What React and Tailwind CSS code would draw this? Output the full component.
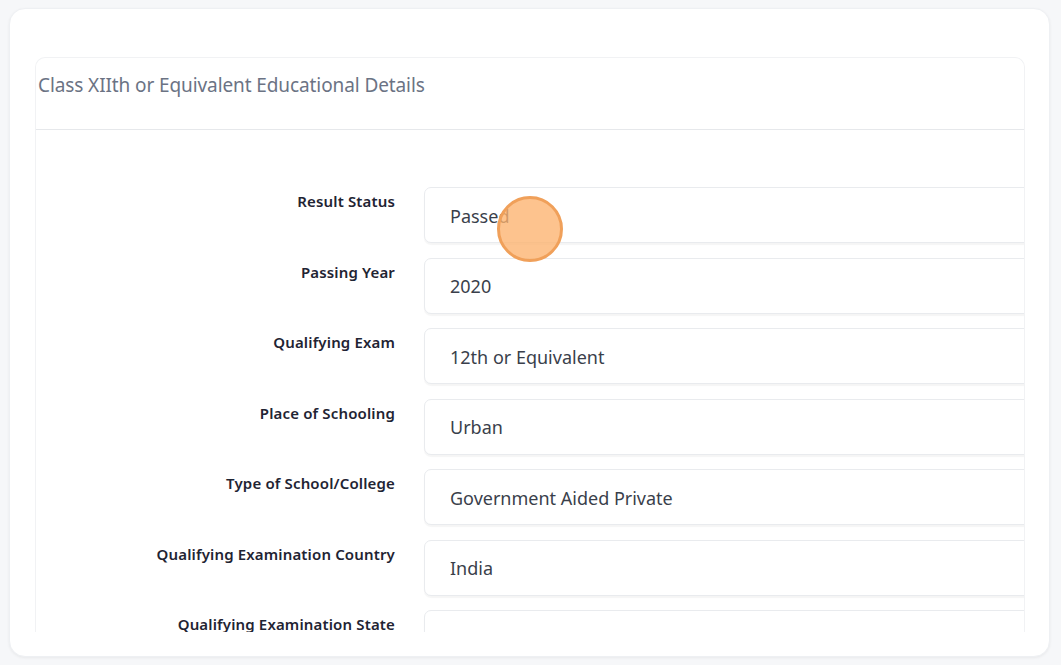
import React from "react";

const rows = [
  ["Result Status", "Passed"],
  ["Passing Year", "2020"],
  ["Qualifying Exam", "12th or Equivalent"],
  ["Place of Schooling", "Urban"],
  ["Type of School/College", "Government Aided Private"],
  ["Qualifying Examination Country", "India"],
  ["Qualifying Examination State", "DELHI"],
];

export default function App() {
  return (
    <div
      className="relative w-full h-[665px] bg-[#f6f7f9] pt-[8px] pl-[9px] pr-[11px] pb-[8px] overflow-hidden"
      style={{ fontFamily: '"Noto Sans", "Open Sans", sans-serif' }}
    >
      <div className="h-full bg-white rounded-[16px] border border-[#eef0f3] shadow-[0_1px_3px_rgba(0,0,0,0.06)] pt-[48px] pl-[25px] pr-[24px] pb-[24px] flex flex-col">
        <div className="flex-1 min-h-0 rounded-t-[10px] border-t border-l border-r border-[#f1f2f4] overflow-hidden flex flex-col">
          <div className="h-[72px] shrink-0 border-b border-[#e6e8eb] pl-[2px] pt-[14px]">
            <div className="text-[19px] leading-[26px] text-[#6b7384] tracking-[-0.1px]">
              Class XIIth or Equivalent Educational Details
            </div>
          </div>
          <div className="flex-1 min-h-0 overflow-hidden pt-[57px]">
            {rows.map(([label, value]) => (
              <div key={label} className="flex items-start mb-[14.5px]">
                <div className="w-[359px] shrink-0 text-right pt-[4px] text-[15px] leading-[21px] font-semibold text-[#1f2433] tracking-[0.15px]">
                  {label}
                </div>
                <div className="ml-[29px] w-[800px] shrink-0 h-[56px] rounded-[7px] border border-[#e9ebee] shadow-[0_2px_1px_rgba(0,0,0,0.04)] bg-white flex items-center pl-[25px] pt-[2px] text-[18px] text-[#3a3f4b]">
                  {value}
                </div>
              </div>
            ))}
          </div>
        </div>
      </div>
      <div className="absolute left-[497px] top-[196px] w-[66px] h-[66px] rounded-full border-[3px] border-[#f0a05a] bg-[rgba(252,178,110,0.78)]" />
    </div>
  );
}
